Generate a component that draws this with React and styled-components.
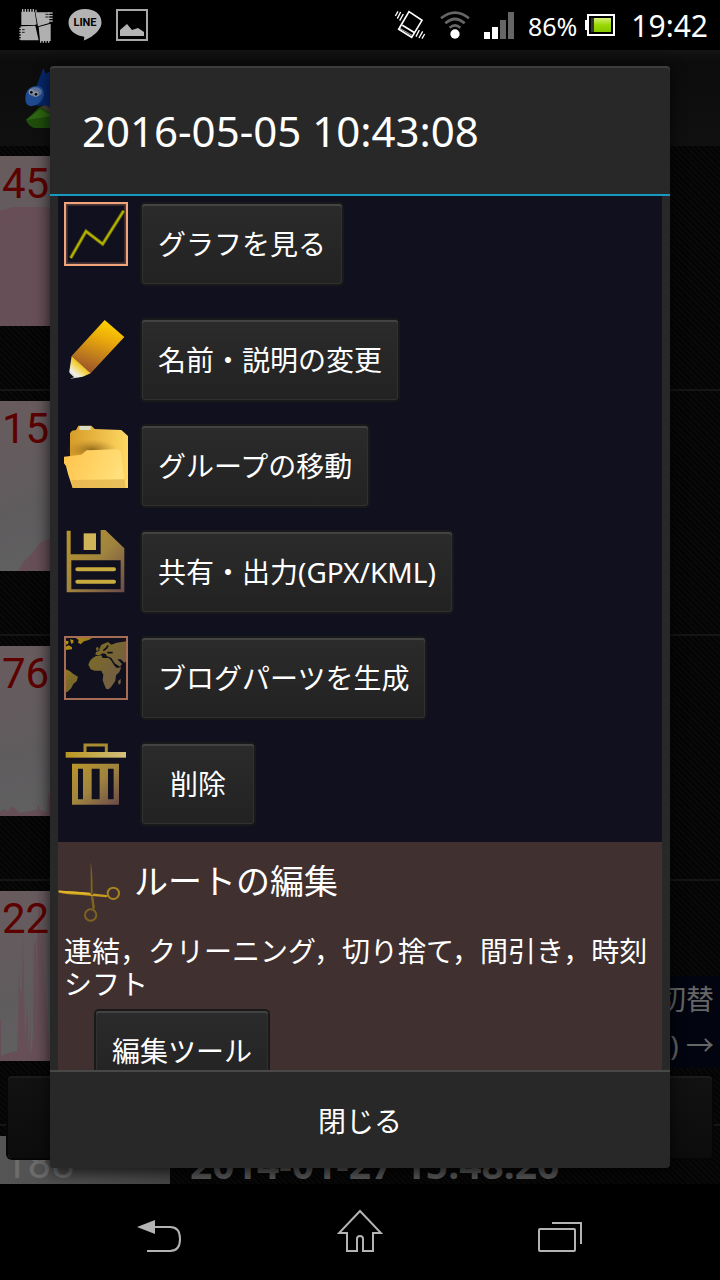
import React from "react";
import styled, { createGlobalStyle, css } from "styled-components";

const GlobalStyle = createGlobalStyle`
  * { box-sizing: border-box; }
  body { margin: 0; background: #000; }
  button { font: inherit; color: inherit; border: 0; background: none; padding: 0; cursor: pointer; }
  h1, h2, p, ul { margin: 0; padding: 0; font-weight: 400; }
`;

const Screen = styled.div`
  height: 100vh;
  min-height: 640px;
  display: flex;
  flex-direction: column;
  overflow: hidden;
  background: #000;
  color: #fff;
  font-family: "Noto Sans", "Noto Sans CJK JP", sans-serif;
  font-size: 28px;
`;

/* ---------- status bar ---------- */
const StatusBar = styled.header`
  flex: none;
  height: 50px;
  display: flex;
  align-items: center;
  justify-content: space-between;
  padding: 0 12px 0 18px;
`;
const StatusGroup = styled.div`
  display: flex;
  align-items: center;
  gap: ${(p) => p.$gap}px;
`;
const Battery = styled.span`
  padding-top: 2px;
  font-size: 25px;
  line-height: 32px;
  margin-right: -6px;
`;
const Clock = styled.time`
  padding-top: 2px;
  font-size: 30px;
  line-height: 32px;
  margin-left: 2px;
`;

/* ---------- dimmed page behind the dialog ---------- */
const Stage = styled.main`
  flex: 1;
  min-height: 0;
  position: relative;
  overflow: hidden;
  background: repeating-linear-gradient(45deg, #040404 0 2px, #090909 2px 4px);
`;
const AppBar = styled.div`
  height: 96px;
  padding: 16px 20px;
  background: linear-gradient(#141414, #0c0c0c 12px, #101010);
`;
const TrackRow = styled.div`
  height: 245px;
  display: flex;
  gap: 20px;
  padding-top: 10px;
  border-bottom: 2px solid #151515;
`;
const Thumb = styled.div`
  flex: none;
  width: 170px;
  height: 170px;
  display: grid;
  background: ${(p) =>
    p.$faint
      ? "linear-gradient(90deg, #555, #464646)"
      : "linear-gradient(160deg, #695b5e, #5f5c5e 50%, #626464)"};
  > * { grid-area: 1 / 1; }
`;
const Distance = styled.span`
  font-family: Roboto, sans-serif;
  font-size: 42px;
  line-height: 56px;
  padding-left: ${(p) => (p.$faint ? 4 : 2)}px;
  color: ${(p) => (p.$faint ? "#6c6c6c" : "#5c0000")};
`;
const TrackName = styled.strong`
  font-size: 39px;
  line-height: 56px;
  color: #5a5a5a;
`;
const SwitchHint = styled.div`
  position: absolute;
  right: 0;
  bottom: 116px;
  padding: 0 6px;
  width: 220px;
  text-align: right;
  line-height: 46px;
  color: #666;
  background: #020510;
`;
const PageButton = styled.button`
  position: absolute;
  left: 8px;
  right: 8px;
  bottom: 26px;
  height: 82px;
  border-radius: 4px;
  background: linear-gradient(#121212, #0c0c0c);
  box-shadow: 0 0 0 2px #060606, inset 0 2px 0 #1b1b1b;
`;

/* ---------- dialog ---------- */
const Dialog = styled.section`
  position: absolute;
  inset: 16px 50px;
  display: flex;
  flex-direction: column;
  border-radius: 4px;
  overflow: hidden;
  background: #282828;
  box-shadow: 0 4px 16px rgba(0, 0, 0, 0.75), inset 0 2px 0 #3d3d3d;
`;
const DialogTitle = styled.h1`
  flex: none;
  padding: 33px 32px 31px;
  font-size: 42px;
  line-height: 64px;
  border-bottom: 2px solid #1899c4;
`;
const DialogBody = styled.div`
  flex: 1;
  min-height: 0;
  margin: 0 8px;
  overflow-y: auto;
  scrollbar-width: none;
`;
const ActionList = styled.ul`
  display: flex;
  flex-direction: column;
  gap: 24px;
  padding: 6px 6px 18px;
  list-style: none;
  background: #10101f;
`;
const ActionRow = styled.li`
  display: flex;
  align-items: flex-start;
  gap: 14px;
  padding-bottom: ${(p) => (p.$spaced ? 10 : 0)}px;
`;
const bevel = css`
  background: linear-gradient(#2b2b2b, #222);
  box-shadow: 0 0 0 2px #191919, inset 0 2px 0 #434343, inset 0 0 0 1px #303030;
`;
const ActionButton = styled.button`
  min-width: 112px;
  height: 80px;
  margin-top: 2px;
  padding: 0 16px;
  border-radius: 3px;
  line-height: 40px;
  white-space: nowrap;
  ${bevel}
`;
const EditSection = styled.section`
  padding: 16px 6px;
  background: #403030;
`;
const EditHead = styled.div`
  display: flex;
  gap: 12px;
  margin-left: -6px;
`;
const EditTitle = styled.h2`
  font-size: 34px;
  line-height: 46px;
`;
const EditText = styled.p`
  margin: 13px 0 8px;
  line-height: 33px;
`;
const EditButton = styled(ActionButton)`
  margin-left: 32px;
`;
const CloseButton = styled.button`
  flex: none;
  height: 98px;
  border-top: 2px solid #484848;
`;

/* ---------- navigation bar ---------- */
const NavBar = styled.nav`
  flex: none;
  height: 96px;
  display: flex;
  padding: 0 60px;
`;
const NavButton = styled.button`
  display: flex;
  flex: 1;
  justify-content: center;
  align-items: flex-end;
  padding-bottom: 27px;
`;

/* ---------- icons ---------- */
const Glyph = styled.svg.attrs({ "aria-hidden": true })`
  display: block;
  flex: none;
`;
const Icon64 = ({ children }) => (
  <Glyph width="64" height="64" viewBox="0 0 192 192">{children}</Glyph>
);
const GoldGradient = ({ id }) => (
  <linearGradient id={id} x1="0" y1="0" x2="1" y2="1">
    <stop offset="0" stopColor="#b8962a" />
    <stop offset=".5" stopColor="#a0843e" />
    <stop offset="1" stopColor="#6b4a4a" />
  </linearGradient>
);

const GraphIcon = () => (
  <Icon64>
    <rect x="7" y="7" width="178" height="178" fill="none" stroke="#4d3838" strokeWidth="8" />
    <rect x="3" y="3" width="186" height="186" fill="none" stroke="#f0a47c" strokeWidth="6" />
    <path d="M20 168 66 88 116 126 179 26" fill="none" stroke="#5a5a08" strokeWidth="11" />
    <path d="M20 168 66 88 116 126 179 26" fill="none" stroke="#b4b400" strokeWidth="6" />
  </Icon64>
);
const PencilIcon = () => (
  <Icon64>
    <defs>
      <linearGradient id="pen" gradientUnits="userSpaceOnUse" x1="122" y1="6" x2="70" y2="165">
        <stop offset="0" stopColor="#ffd000" />
        <stop offset=".35" stopColor="#e8a80c" />
        <stop offset="1" stopColor="#98502c" />
      </linearGradient>
      <linearGradient id="tip" gradientUnits="userSpaceOnUse" x1="54" y1="138" x2="22" y2="176">
        <stop offset="0" stopColor="#f0bc10" />
        <stop offset=".4" stopColor="#f4dc70" />
        <stop offset=".75" stopColor="#eee" />
        <stop offset="1" stopColor="#ccc" />
      </linearGradient>
    </defs>
    <path d="M122 6 181 57 80 166 23 114Z" fill="url(#pen)" />
    <path d="M23 114 80 166 56 176 20 182 16 160Z" fill="url(#tip)" />
    <path d="M16 164 30 178 18 182 15 176Z" fill="#111" />
  </Icon64>
);
const FolderIcon = () => (
  <Icon64>
    <defs>
      <linearGradient id="fback" x1="0" y1="0" x2="1" y2="0">
        <stop offset="0" stopColor="#d69c28" />
        <stop offset="1" stopColor="#ffd863" />
      </linearGradient>
      <linearGradient id="ffront" x1="0" y1="0" x2="1" y2=".3">
        <stop offset="0" stopColor="#ffc24a" />
        <stop offset="1" stopColor="#ffe07a" />
      </linearGradient>
      <radialGradient id="fshade">
        <stop offset="0" stopColor="#6c480c" stopOpacity=".7" />
        <stop offset="1" stopColor="#a87420" stopOpacity="0" />
      </radialGradient>
    </defs>
    <path d="M18 28 24 20 36 18 43 5H82L92 15 172 18 192 36V192H28L18 110Z" fill="url(#fback)" />
    <rect x="46" y="6" width="34" height="12" rx="3" fill="#dcdcc0" />
    <ellipse cx="84" cy="78" rx="76" ry="32" fill="url(#fshade)" />
    <path d="M0 98 52 92 66 80Q70 77 76 79L150 76Q168 75 171 86L184 192H26L20 174 12 150 6 126 0 118Z" fill="url(#ffront)" />
    <path d="M22 168 182 166 184 192H26Z" fill="#e0b04c" opacity=".7" />
  </Icon64>
);
const FloppyIcon = () => (
  <Icon64>
    <defs><GoldGradient id="flop" /></defs>
    <path
      fillRule="evenodd"
      fill="url(#flop)"
      d="M8 2H20V73H110V0H124L181 55V187H8ZM22 91V178H170V91Z"
    />
    <rect x="59" y="10" width="37" height="50" fill="#d0b458" />
    <path d="M40 118H150M40 155H150" stroke="#c8ac40" strokeWidth="12" strokeLinecap="round" />
  </Icon64>
);
const MapIcon = () => (
  <Icon64>
    <defs>
      <linearGradient id="land" gradientUnits="userSpaceOnUse" x1="20" y1="0" x2="150" y2="110">
        <stop offset="0" stopColor="#b8940c" />
        <stop offset=".5" stopColor="#7c6a28" />
        <stop offset="1" stopColor="#74603f" />
      </linearGradient>
    </defs>
    <g fill="url(#land)">
      <path d="M34 5H86L74 12 60 16 50 25 42 20 44 12Z" />
      <path d="M5 14 14 16 12 24 5 26ZM5 32 14 28 24 34 24 40 5 42ZM18 10 28 12 28 20 22 24Z" />
      <path d="M5 100 16 104 28 114 42 122 38 136 28 144 22 156 10 168 5 168Z" />
      <path d="M86 66 96 60 112 58 116 66 134 66 142 74 150 88 158 96 172 94 166 108 156 118 154 134 142 152 134 160 126 158 120 144 116 132 118 116 112 104 92 104 80 100 73 86 78 74Z" />
      <path d="M106 38 112 26 132 18 142 26 158 20 188 16V74L182 80 170 70 160 70 174 84 168 92 152 82 142 66 128 60 126 54 116 52 106 58 94 56 96 48 106 44Z" />
      <path d="M96 36 102 32 104 42 98 46ZM162 136 170 128 170 142 164 146Z" />
    </g>
    <path d="M118 44 128 36 132 28M130 50 146 50" fill="none" stroke="#10101f" strokeWidth="5" />
    <rect x="3" y="3" width="186" height="186" fill="none" stroke="#a66c54" strokeWidth="6" />
  </Icon64>
);
const TrashIcon = () => (
  <Icon64>
    <defs>
      <GoldGradient id="bin" />
      <linearGradient id="lid"><stop offset="0" stopColor="#b8961e" /><stop offset="1" stopColor="#d4c080" /></linearGradient>
    </defs>
    <path d="M63 32V9H127V32" fill="none" stroke="#a88c30" strokeWidth="9" />
    <rect x="5" y="30" width="181" height="17" fill="url(#lid)" />
    <path
      fillRule="evenodd"
      fill="url(#bin)"
      d="M24 65H165V188H24ZM42 80V172H57V80ZM83 80V172H107V80ZM132 80V172H149V80Z"
    />
  </Icon64>
);
const ScissorsIcon = () => (
  <Icon64>
    <path d="M98 11Q104 40 104 100L111 150 104 156 98 110Z" fill="#7c6420" />
    <circle cx="98" cy="171" r="17" fill="none" stroke="#7c6420" strokeWidth="6" />
    <path d="M2 98 60 101 152 112 146 118 60 110Q20 110 2 103Z" fill="#c89c20" />
    <path d="M2 100 96 107" stroke="#e4b828" strokeWidth="5" />
    <circle cx="166" cy="106" r="17" fill="none" stroke="#a88420" strokeWidth="6" />
    <circle cx="103" cy="107" r="3" fill="#403030" />
  </Icon64>
);

const PatchIcon = () => (
  <Glyph width="36" height="36" viewBox="0 0 108 108">
    <g fill="#b0b0b0">
      <path d="M10 14H50L56 52 50 54H10Z" />
      <path d="M52 16H94V48L60 58Z" />
      <path d="M8 58 52 56 62 100H8Z" />
      <path d="M62 60 98 50V102H66Z" />
    </g>
    <path d="M14 6V16M22 6V16M30 6V16M38 6V16M46 6V16M54 8V16M90 18H104M90 26H104M90 34H104M90 42H104M4 64H14M4 72H14M4 80H14M4 88H14M4 96H14M68 94V107M76 94V107M84 94V107M92 94V107" stroke="#b0b0b0" strokeWidth="4" />
    <path d="M12 68H20M12 76H20M82 22H92M82 30H92" stroke="#222" strokeWidth="3" />
  </Glyph>
);
const LineIcon = () => (
  <Glyph width="34" height="34" viewBox="0 0 34 34">
    <path d="M17 1C7.500 1 .5 7 .5 14.500S7 27.500 15.500 28.500C17 29 16 31 15.800 32.500 22 30.500 33.500 23 33.500 14.500S26.500 1 17 1Z" fill="#b4b4b4" />
    <text x="17" y="18" textAnchor="middle" fontFamily="Roboto, sans-serif" fontWeight="700" fontSize="11" fill="#000">LINE</text>
  </Glyph>
);
const PictureIcon = () => (
  <Glyph width="32" height="34" viewBox="0 0 32 34">
    <rect x="1" y="2" width="30" height="30" fill="none" stroke="#a8a8a8" strokeWidth="2" />
    <path d="M4 28V22L11 16 16 22 22 20 28 24V28Z" fill="#b4b4b4" />
  </Glyph>
);
const VibrateIcon = () => (
  <Glyph width="32" height="30" viewBox="0 0 96 90" fill="none" stroke="#fff">
    <path d="M45 5 84 31 53 82 14 58ZM25 46 62 68" strokeWidth="5" />
    <path d="M18 55 56 77" strokeWidth="2" />
    <path d="M4 18 12 4M10 26 20 6M17 32 28 12M66 80 76 60M75 84 86 64M84 86 92 72" strokeWidth="4" />
  </Glyph>
);
const WifiIcon = () => (
  <Glyph width="30" height="30" viewBox="0 0 90 90" fill="none" stroke="#666" strokeWidth="8">
    <path d="M3 25Q45-9 87 25M16 40Q45 14 74 40M29 53Q45 39 61 53" />
    <circle cx="45" cy="72" r="14" fill="#fff" stroke="none" />
  </Glyph>
);
const SignalIcon = () => (
  <Glyph width="30" height="28" viewBox="0 0 30 28">
    <path d="M0 21H6V28H0ZM8 16H14V28H8Z" fill="#fff" />
    <path d="M16 9H22V28H16ZM24 1H30V28H24Z" fill="#666" />
  </Glyph>
);
const BatteryIcon = () => (
  <Glyph width="30" height="22" viewBox="0 0 30 22">
    <defs>
      <linearGradient id="cell" x1="0" y1="0" x2="0" y2="1"><stop offset="0" stopColor="#d4f078" /><stop offset=".5" stopColor="#9ad800" /><stop offset="1" stopColor="#84c800" /></linearGradient>
    </defs>
    <path d="M0 6H3V16H0Z" fill="#fff" />
    <rect x="3" y="1" width="26" height="20" fill="#000" stroke="#fff" strokeWidth="2" />
    <path d="M6 4H9V18H6Z" fill="#333" />
    <path d="M9 4H26V18H9Z" fill="url(#cell)" />
  </Glyph>
);
const MascotIcon = () => (
  <Glyph width="64" height="64" viewBox="0 0 192 192">
    <path d="M18 162 60 122 120 140V186H44Q26 182 18 162Z" fill="#1f4d0c" />
    <path d="M18 162 60 130 100 150Z" fill="#2f6512" />
    <path d="M62 122 90 110V140Z" fill="#4a4038" />
    <path d="M50 58 70 6 78 24 100 8V130L76 118 50 120Z" fill="#06276a" />
    <path d="M16 96Q18 60 52 60 74 62 72 88 66 110 46 118 16 128 16 96Z" fill="#204a90" />
    <ellipse cx="46" cy="78" rx="20" ry="14" fill="#5c74a0" />
    <circle cx="34" cy="78" r="8" fill="#8c94a0" /><circle cx="48" cy="84" r="8" fill="#8c94a0" />
    <circle cx="34" cy="79" r="4" fill="#000" /><circle cx="48" cy="85" r="4" fill="#000" />
  </Glyph>
);

const chartShapes = [
  "M0 55 12 51H170V170H0Z",
  "M18 170 24 160 34 150 40 142 50 137H170V170Z",
  "M0 166 3 163 8 165 12 160 16 163 20 167 30 165 37 164 38 158 40 164 47 166 48 146 50 150V170H0Z",
  "M0 127 1 130V165L8 162 17 160 18 136 19 80 20 98 22 100 23 44 24 96 25 150 27 110 29 164 30 118 31 166 33 144 34 54 36 50 36 146 37 56 39 0 41 60 42 30 44 80 46 110 47 120 50 170H0Z",
];
const Chart = ({ d }) => (
  <Glyph width="170" height="170" viewBox="0 0 170 170"><path d={d} fill="#684e57" opacity=".9" /></Glyph>
);

const tracks = ["45", "15", "76", "22"];
const actions = [
  { label: "グラフを見る", Icon: GraphIcon, spaced: true },
  { label: "名前・説明の変更", Icon: PencilIcon },
  { label: "グループの移動", Icon: FolderIcon },
  { label: "共有・出力(GPX/KML)", Icon: FloppyIcon },
  { label: "ブログパーツを生成", Icon: MapIcon },
  { label: "削除", Icon: TrashIcon },
];

export default function App() {
  return (
    <Screen>
      <GlobalStyle />
      <StatusBar>
        <StatusGroup $gap={14}>
          <PatchIcon />
          <LineIcon />
          <PictureIcon />
        </StatusGroup>
        <StatusGroup $gap={14}>
          <VibrateIcon />
          <WifiIcon />
          <SignalIcon />
          <Battery>86%</Battery>
          <BatteryIcon />
          <Clock>19:42</Clock>
        </StatusGroup>
      </StatusBar>

      <Stage>
        <AppBar><MascotIcon /></AppBar>
        {tracks.map((value, i) => (
          <TrackRow key={value}>
            <Thumb>
              <Chart d={chartShapes[i]} />
              <Distance>{value}</Distance>
            </Thumb>
          </TrackRow>
        ))}
        <TrackRow>
          <Thumb $faint><Distance $faint>188</Distance></Thumb>
          <TrackName>2014-01-27 15:48:26</TrackName>
        </TrackRow>
        <SwitchHint>切替<br />) →</SwitchHint>
        <PageButton aria-label="メニュー" />

        <Dialog role="dialog" aria-labelledby="dialog-title">
          <DialogTitle id="dialog-title">2016-05-05 10:43:08</DialogTitle>
          <DialogBody>
            <ActionList>
              {actions.map(({ label, Icon, spaced }) => (
                <ActionRow key={label} $spaced={spaced}>
                  <Icon />
                  <ActionButton>{label}</ActionButton>
                </ActionRow>
              ))}
            </ActionList>
            <EditSection>
              <EditHead>
                <ScissorsIcon />
                <EditTitle>ルートの編集</EditTitle>
              </EditHead>
              <EditText>連結，クリーニング，切り捨て，間引き，時刻シフト</EditText>
              <EditButton>編集ツール</EditButton>
            </EditSection>
          </DialogBody>
          <CloseButton>閉じる</CloseButton>
        </Dialog>
      </Stage>

      <NavBar>
        <NavButton aria-label="戻る">
          <Glyph width="46" height="34" viewBox="0 0 46 34">
            <path d="M0 8 18 1V15Z" fill="#b4b4b4" />
            <path d="M17 8H33Q43 8 43 20T33 32H10" fill="none" stroke="#b4b4b4" strokeWidth="2" />
          </Glyph>
        </NavButton>
        <NavButton aria-label="ホーム">
          <Glyph width="46" height="44" viewBox="0 0 46 44" fill="none" stroke="#b4b4b4" strokeWidth="2">
            <path d="M23 2 44 24H36V42H26V30Q26 27 23 27T20 30V42H10V24H2Z" />
          </Glyph>
        </NavButton>
        <NavButton aria-label="最近使ったアプリ">
          <Glyph width="44" height="32" viewBox="0 0 44 32" fill="none" stroke="#b4b4b4" strokeWidth="2">
            <rect x="1" y="8" width="36" height="22" rx="1" />
            <path d="M14 2H43V23" />
          </Glyph>
        </NavButton>
      </NavBar>
    </Screen>
  );
}
